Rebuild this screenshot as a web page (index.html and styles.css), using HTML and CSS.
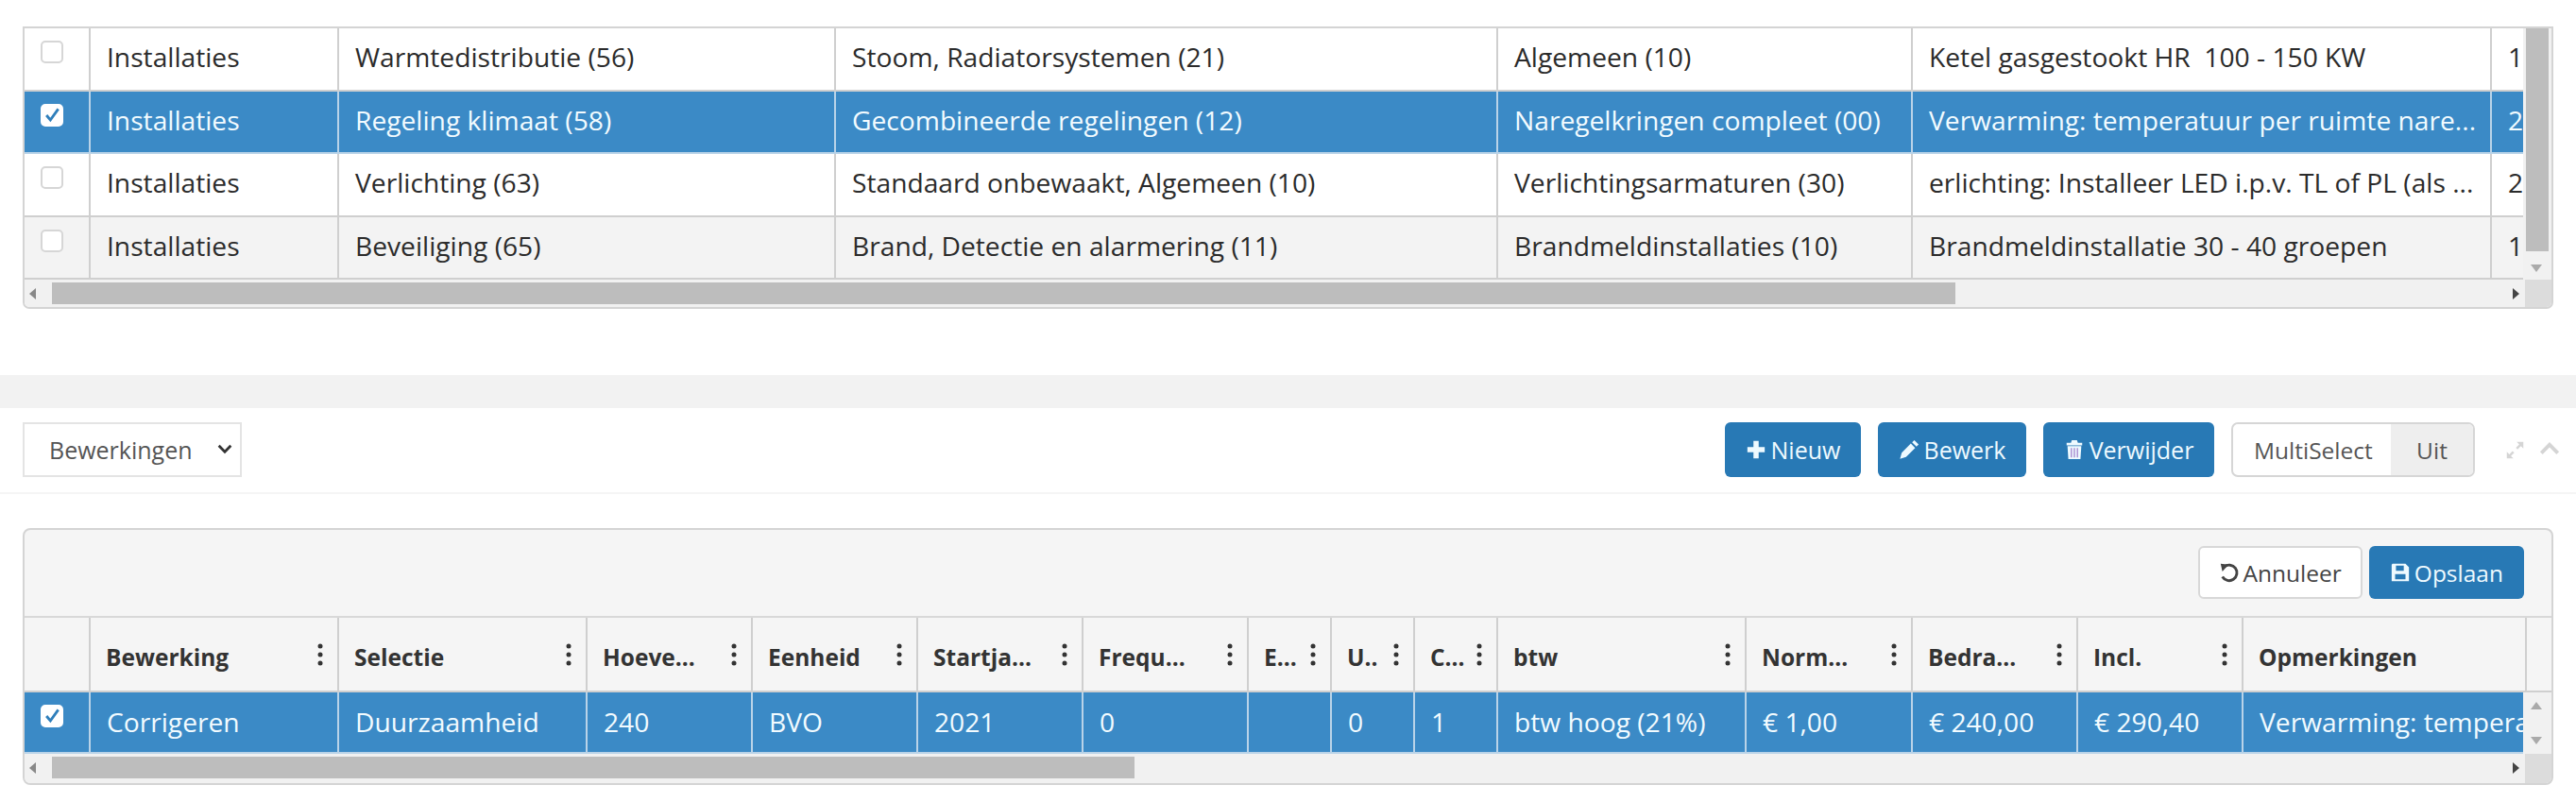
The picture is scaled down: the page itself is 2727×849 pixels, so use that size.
FILE: index.html
```html
<!DOCTYPE html>
<html lang="nl">
<head>
    <meta charset="UTF-8">
    <title>Bewerkingen</title>
    <link rel="stylesheet" href="styles.css">
</head>
<body>
    <svg class="icon-defs" width="0" height="0">
        <symbol id="i-check" viewBox="0 0 24 24"><path d="M5 12l5 6L20 4" fill="none" stroke="#2f7fbb" stroke-width="3.4"/></symbol>
        <symbol id="i-dots" viewBox="0 0 6 24"><circle cx="3" cy="3" r="2.5"/><circle cx="3" cy="12" r="2.5"/><circle cx="3" cy="21" r="2.5"/></symbol>
        <symbol id="i-plus" viewBox="0 0 24 24"><path d="M9 2h6v7h7v6h-7v7H9v-7H2V9h7z"/></symbol>
        <symbol id="i-pencil" viewBox="0 0 24 24"><path d="M18 1l5 5-2.500 2.500-5-5zM14 5l5 5L8.500 20.500 1.500 22.500l2-7z"/></symbol>
        <symbol id="i-trash" viewBox="0 0 24 24"><path d="M9 1h6l1 3h5v3H3V4h5zM4 8h16l-1 15H5z"/><path d="M8.500 10v11M12 10v11M15.500 10v11" stroke="#a98ad0" stroke-width="1.500"/></symbol>
        <symbol id="i-undo" viewBox="0 0 24 24"><path d="M6 5.500A9 9 0 1 1 4 17" fill="none" stroke="currentColor" stroke-width="3.200"/><path d="M2 2l9 1-7 8z"/></symbol>
        <symbol id="i-save" viewBox="0 0 24 24"><path fill-rule="evenodd" d="M3 2h15l4 4v16H2V3zM7 4v6h9V4zM6 14v6h12v-6z"/></symbol>
        <symbol id="i-expand" viewBox="0 0 24 24"><path d="M14 2h8v8l-3-3-4 4-2-2 4-4zM10 22H2v-8l3 3 4-4 2 2-4 4z"/></symbol>
        <symbol id="i-up" viewBox="0 0 24 16"><path d="M12 1l11 11-3 3-8-8-8 8-3-3z"/></symbol>
        <symbol id="i-down" viewBox="0 0 24 16"><path d="M12 15L1 4l3-3 8 8 8-8 3 3z"/></symbol>
    </svg>

    <!-- bovenste grid -->
    <div class="top-section">
        <div class="grid grid-top">
            <div class="grid-body">
                <div class="grid-viewport">
                    <div class="row row-top">
                        <div class="cell cell-check"><span class="checkbox"></span></div>
                        <div class="cell">Installaties</div>
                        <div class="cell">Warmtedistributie (56)</div>
                        <div class="cell">Stoom, Radiatorsystemen (21)</div>
                        <div class="cell">Algemeen (10)</div>
                        <div class="cell">Ketel gasgestookt HR  100 - 150 KW</div>
                        <div class="cell">1</div>
                    </div>
                    <div class="row row-top selected">
                        <div class="cell cell-check"><span class="checkbox"><svg class="check"><use href="#i-check"/></svg></span></div>
                        <div class="cell">Installaties</div>
                        <div class="cell">Regeling klimaat (58)</div>
                        <div class="cell">Gecombineerde regelingen (12)</div>
                        <div class="cell">Naregelkringen compleet (00)</div>
                        <div class="cell">Verwarming: temperatuur per ruimte nare...</div>
                        <div class="cell">2</div>
                    </div>
                    <div class="row row-top">
                        <div class="cell cell-check"><span class="checkbox"></span></div>
                        <div class="cell">Installaties</div>
                        <div class="cell">Verlichting (63)</div>
                        <div class="cell">Standaard onbewaakt, Algemeen (10)</div>
                        <div class="cell">Verlichtingsarmaturen (30)</div>
                        <div class="cell">erlichting: Installeer LED i.p.v. TL of PL (als ...</div>
                        <div class="cell">2</div>
                    </div>
                    <div class="row row-top alt">
                        <div class="cell cell-check"><span class="checkbox"></span></div>
                        <div class="cell">Installaties</div>
                        <div class="cell">Beveiliging (65)</div>
                        <div class="cell">Brand, Detectie en alarmering (11)</div>
                        <div class="cell">Brandmeldinstallaties (10)</div>
                        <div class="cell">Brandmeldinstallatie 30 - 40 groepen</div>
                        <div class="cell">1</div>
                    </div>
                </div>
                <div class="scroll-v">
                    <div class="scroll-v-thumb"></div>
                    <span class="arrow arrow-down"></span>
                </div>
            </div>
            <div class="scroll-row">
                <div class="scroll-h">
                    <span class="arrow arrow-left"></span>
                    <div class="scroll-h-thumb thumb-top"></div>
                    <span class="arrow arrow-right"></span>
                </div>
                <div class="scroll-corner"></div>
            </div>
        </div>
    </div>

    <div class="band"></div>

    <!-- werkbalk -->
    <div class="toolbar">
        <div class="select-wrap">
            <select class="action-select">
                <option>Bewerkingen</option>
            </select>
            <svg class="select-arrow"><use href="#i-down"/></svg>
        </div>
        <div class="toolbar-right">
            <button class="btn btn-primary btn-new"><svg class="btn-icon"><use href="#i-plus"/></svg>Nieuw</button>
            <button class="btn btn-primary btn-edit"><svg class="btn-icon"><use href="#i-pencil"/></svg>Bewerk</button>
            <button class="btn btn-primary btn-delete"><svg class="btn-icon"><use href="#i-trash"/></svg>Verwijder</button>
            <div class="toggle">
                <span class="toggle-label">MultiSelect</span>
                <span class="toggle-state">Uit</span>
            </div>
            <div class="panel-tools">
                <svg class="tool-expand"><use href="#i-expand"/></svg>
                <svg class="tool-up"><use href="#i-up"/></svg>
            </div>
        </div>
    </div>

    <!-- onderste grid -->
    <div class="bottom-section">
        <div class="grid grid-bottom">
            <div class="grid-actions">
                <button class="btn btn-small btn-default"><svg class="btn-icon-small"><use href="#i-undo"/></svg>Annuleer</button>
                <button class="btn btn-small btn-primary"><svg class="btn-icon-small"><use href="#i-save"/></svg>Opslaan</button>
            </div>
            <div class="head-wrap">
                <div class="row row-bottom row-head">
                    <div class="cell"></div>
                    <div class="cell"><span>Bewerking</span><svg class="dots"><use href="#i-dots"/></svg></div>
                    <div class="cell"><span>Selectie</span><svg class="dots"><use href="#i-dots"/></svg></div>
                    <div class="cell"><span>Hoeve...</span><svg class="dots"><use href="#i-dots"/></svg></div>
                    <div class="cell"><span>Eenheid</span><svg class="dots"><use href="#i-dots"/></svg></div>
                    <div class="cell"><span>Startja...</span><svg class="dots"><use href="#i-dots"/></svg></div>
                    <div class="cell"><span>Frequ...</span><svg class="dots"><use href="#i-dots"/></svg></div>
                    <div class="cell"><span>E...</span><svg class="dots"><use href="#i-dots"/></svg></div>
                    <div class="cell"><span>U..</span><svg class="dots"><use href="#i-dots"/></svg></div>
                    <div class="cell"><span>C...</span><svg class="dots"><use href="#i-dots"/></svg></div>
                    <div class="cell"><span>btw</span><svg class="dots"><use href="#i-dots"/></svg></div>
                    <div class="cell"><span>Norm...</span><svg class="dots"><use href="#i-dots"/></svg></div>
                    <div class="cell"><span>Bedra...</span><svg class="dots"><use href="#i-dots"/></svg></div>
                    <div class="cell"><span>Incl.</span><svg class="dots"><use href="#i-dots"/></svg></div>
                    <div class="cell"><span>Opmerkingen</span></div>
                </div>
                <div class="head-filler"></div>
            </div>
            <div class="grid-body">
                <div class="grid-viewport">
                    <div class="row row-bottom row-data selected">
                        <div class="cell cell-check"><span class="checkbox"><svg class="check"><use href="#i-check"/></svg></span></div>
                        <div class="cell">Corrigeren</div>
                        <div class="cell">Duurzaamheid</div>
                        <div class="cell">240</div>
                        <div class="cell">BVO</div>
                        <div class="cell">2021</div>
                        <div class="cell">0</div>
                        <div class="cell"></div>
                        <div class="cell">0</div>
                        <div class="cell">1</div>
                        <div class="cell">btw hoog (21%)</div>
                        <div class="cell">€ 1,00</div>
                        <div class="cell">€ 240,00</div>
                        <div class="cell">€ 290,40</div>
                        <div class="cell">Verwarming: temperatuur per ruimte</div>
                    </div>
                </div>
                <div class="scroll-v scroll-v-small">
                    <span class="arrow arrow-up"></span>
                    <span class="arrow arrow-down"></span>
                </div>
            </div>
            <div class="scroll-row">
                <div class="scroll-h">
                    <span class="arrow arrow-left"></span>
                    <div class="scroll-h-thumb thumb-bottom"></div>
                    <span class="arrow arrow-right"></span>
                </div>
                <div class="scroll-corner"></div>
            </div>
        </div>
    </div>
</body>
</html>
```

FILE: styles.css
```css
:root {
    --row-blue: #3b8ac6;
    --btn-blue: #2879b5;
    --line: #cfcfcf;
    --text: #2b2b2b;
    --track: #f1f1f1;
    --thumb: #bdbdbd;
}

body {
    margin: 0;
    background: #fff;
    color: var(--text);
    font-family: "Open Sans", "Liberation Sans", sans-serif;
    font-size: 28.2px;
}

.icon-defs {
    position: absolute;
}

.top-section {
    padding: 28px 24px 0;
}

.bottom-section {
    padding: 36px 24px 18px;
}

.grid {
    border: 2px solid #d4d4d4;
    border-radius: 0 0 7px 7px;
    overflow: hidden;
}

.grid-bottom {
    border-radius: 8px;
    background: #f5f5f5;
}

.grid-body {
    display: flex;
}

.grid-viewport {
    width: 2647px;
    overflow: hidden;
}

.row {
    display: grid;
    height: 66.5px;
    border-bottom: 2px solid var(--line);
    box-sizing: border-box;
}

.row-top {
    grid-template-columns: 70px 263px 526px 701px 439px 613px 35px;
}

.row-bottom {
    grid-template-columns: 70px 263px 263px 175px 175px 175px 175px 88px 88px 88px 263px 176px 175px 175px 297px;
}

.row-data {
    height: 65px;
}

.row.alt {
    background: #f3f3f3;
}

.row.selected {
    background: var(--row-blue);
    color: #f2fbff;
    border-bottom-color: #b9d3e8;
}

.cell {
    display: flex;
    align-items: center;
    padding: 0 0 2px 17px;
    border-right: 2px solid var(--line);
    white-space: pre;
    overflow: hidden;
    box-sizing: border-box;
    position: relative;
}

.row-top .cell {
    padding-bottom: 4px;
}

.row.selected .cell {
    border-right-color: #b9d3e8;
}

.row-top .cell:last-child,
.row-bottom .cell:last-child {
    border-right: 0;
}

.row .cell-check {
    padding: 13px 0 0 17px;
    align-items: flex-start;
}

.checkbox {
    display: block;
    width: 24px;
    height: 24px;
    background: #fff;
    border: 2px solid #d6d6d6;
    border-radius: 5px;
    box-sizing: border-box;
}

.selected .checkbox {
    border-color: #fff;
}

.check {
    display: block;
    width: 20px;
    height: 20px;
}

.scroll-v {
    position: relative;
    width: 30px;
    background: var(--track);
}

.scroll-v-thumb {
    width: 24px;
    height: 236px;
    margin-left: 3px;
    background: var(--thumb);
}

.scroll-row {
    display: flex;
    height: 29px;
}

.scroll-h {
    position: relative;
    width: 2647px;
    background: var(--track);
}

.scroll-h-thumb {
    position: absolute;
    top: 3px;
    left: 29px;
    height: 23px;
    background: var(--thumb);
}

.thumb-top {
    width: 2015px;
}

.thumb-bottom {
    width: 1146px;
}

.scroll-corner {
    flex: 1;
    background: #dcdcdc;
}

.arrow {
    position: absolute;
    width: 0;
    height: 0;
    border: 6px solid transparent;
}

.arrow-left {
    left: 5px;
    top: 9px;
    border-left-width: 0;
    border-right: 7px solid #888;
}

.arrow-right {
    right: 6px;
    top: 9px;
    border-right-width: 0;
    border-left: 7px solid #444;
}

.arrow-down {
    left: 8px;
    bottom: 8px;
    border-bottom-width: 0;
    border-top: 8px solid #aaa;
}

.arrow-up {
    left: 8px;
    top: 10px;
    border-top-width: 0;
    border-bottom: 8px solid #aaa;
}

.scroll-v-small .arrow-down {
    bottom: 10px;
}

.band {
    height: 35px;
    margin-top: 70px;
    background: #f2f2f2;
}

.toolbar {
    display: flex;
    justify-content: space-between;
    padding: 15px 17px 16px 24px;
    border-bottom: 2px solid #f5f5f5;
}

.select-wrap {
    position: relative;
    height: 58px;
}

.action-select {
    appearance: none;
    width: 232px;
    height: 58px;
    padding: 0 8px 0 26px;
    background: #fff;
    border: 2px solid #e4e4e4;
    color: #555;
    font-family: inherit;
    font-size: 25px;
}

.select-arrow {
    position: absolute;
    top: 23px;
    left: 206px;
    width: 16px;
    height: 11px;
    fill: #333;
    pointer-events: none;
}

.toolbar-right {
    display: flex;
    align-items: center;
    gap: 18px;
}

.btn {
    display: flex;
    align-items: center;
    justify-content: center;
    gap: 5px;
    height: 58px;
    padding: 0;
    border: 2px solid transparent;
    border-radius: 6px;
    font-family: inherit;
    font-size: 25px;
}

.btn-new {
    width: 144px;
}

.btn-edit {
    width: 157px;
}

.btn-delete {
    width: 181px;
}

.btn-primary {
    background: var(--btn-blue);
    color: #eefaff;
}

.btn-default {
    background: #fff;
    border-color: #d8d8d8;
    color: #444;
}

.btn-icon {
    width: 22px;
    height: 22px;
    fill: currentColor;
}

.toggle {
    display: flex;
    height: 58px;
    border: 2px solid #d6d6d6;
    border-radius: 7px;
    overflow: hidden;
    box-sizing: border-box;
    color: #555;
    font-size: 24.5px;
}

.toggle-label {
    display: flex;
    align-items: center;
    width: 167px;
    padding-left: 22px;
    box-sizing: border-box;
}

.toggle-state {
    display: flex;
    align-items: center;
    justify-content: center;
    width: 87px;
    background: #eee;
}

.panel-tools {
    display: flex;
    align-items: center;
    gap: 15px;
    margin-left: 14px;
    fill: #d5d5d5;
}

.tool-expand {
    width: 21px;
    height: 21px;
}

.tool-up {
    width: 22px;
    height: 15px;
    margin-bottom: 4px;
}

.grid-actions {
    display: flex;
    justify-content: flex-end;
    gap: 7px;
    height: 93px;
    padding: 17px 29px 0 0;
    border-bottom: 2px solid #d8d8d8;
    box-sizing: border-box;
}

.btn-small {
    height: 56px;
    padding: 0 20px;
    gap: 4px;
    font-size: 24.5px;
}

.btn-icon-small {
    width: 22px;
    height: 22px;
    fill: currentColor;
}

.head-wrap {
    display: flex;
}

.row-head {
    width: 2647px;
    height: 79px;
    font-weight: 700;
    font-size: 24.5px;
    color: #333;
    background: #f5f5f5;
}

.row-head .cell {
    padding: 5px 0 0 16px;
}

.head-filler {
    flex: 1;
    border-bottom: 2px solid var(--line);
    border-left: 2px solid var(--line);
    box-sizing: border-box;
}

.dots {
    position: absolute;
    top: 27px;
    right: 15px;
    width: 6px;
    height: 24px;
    fill: #333;
}

.grid-bottom .scroll-row {
    height: 31px;
}
```
